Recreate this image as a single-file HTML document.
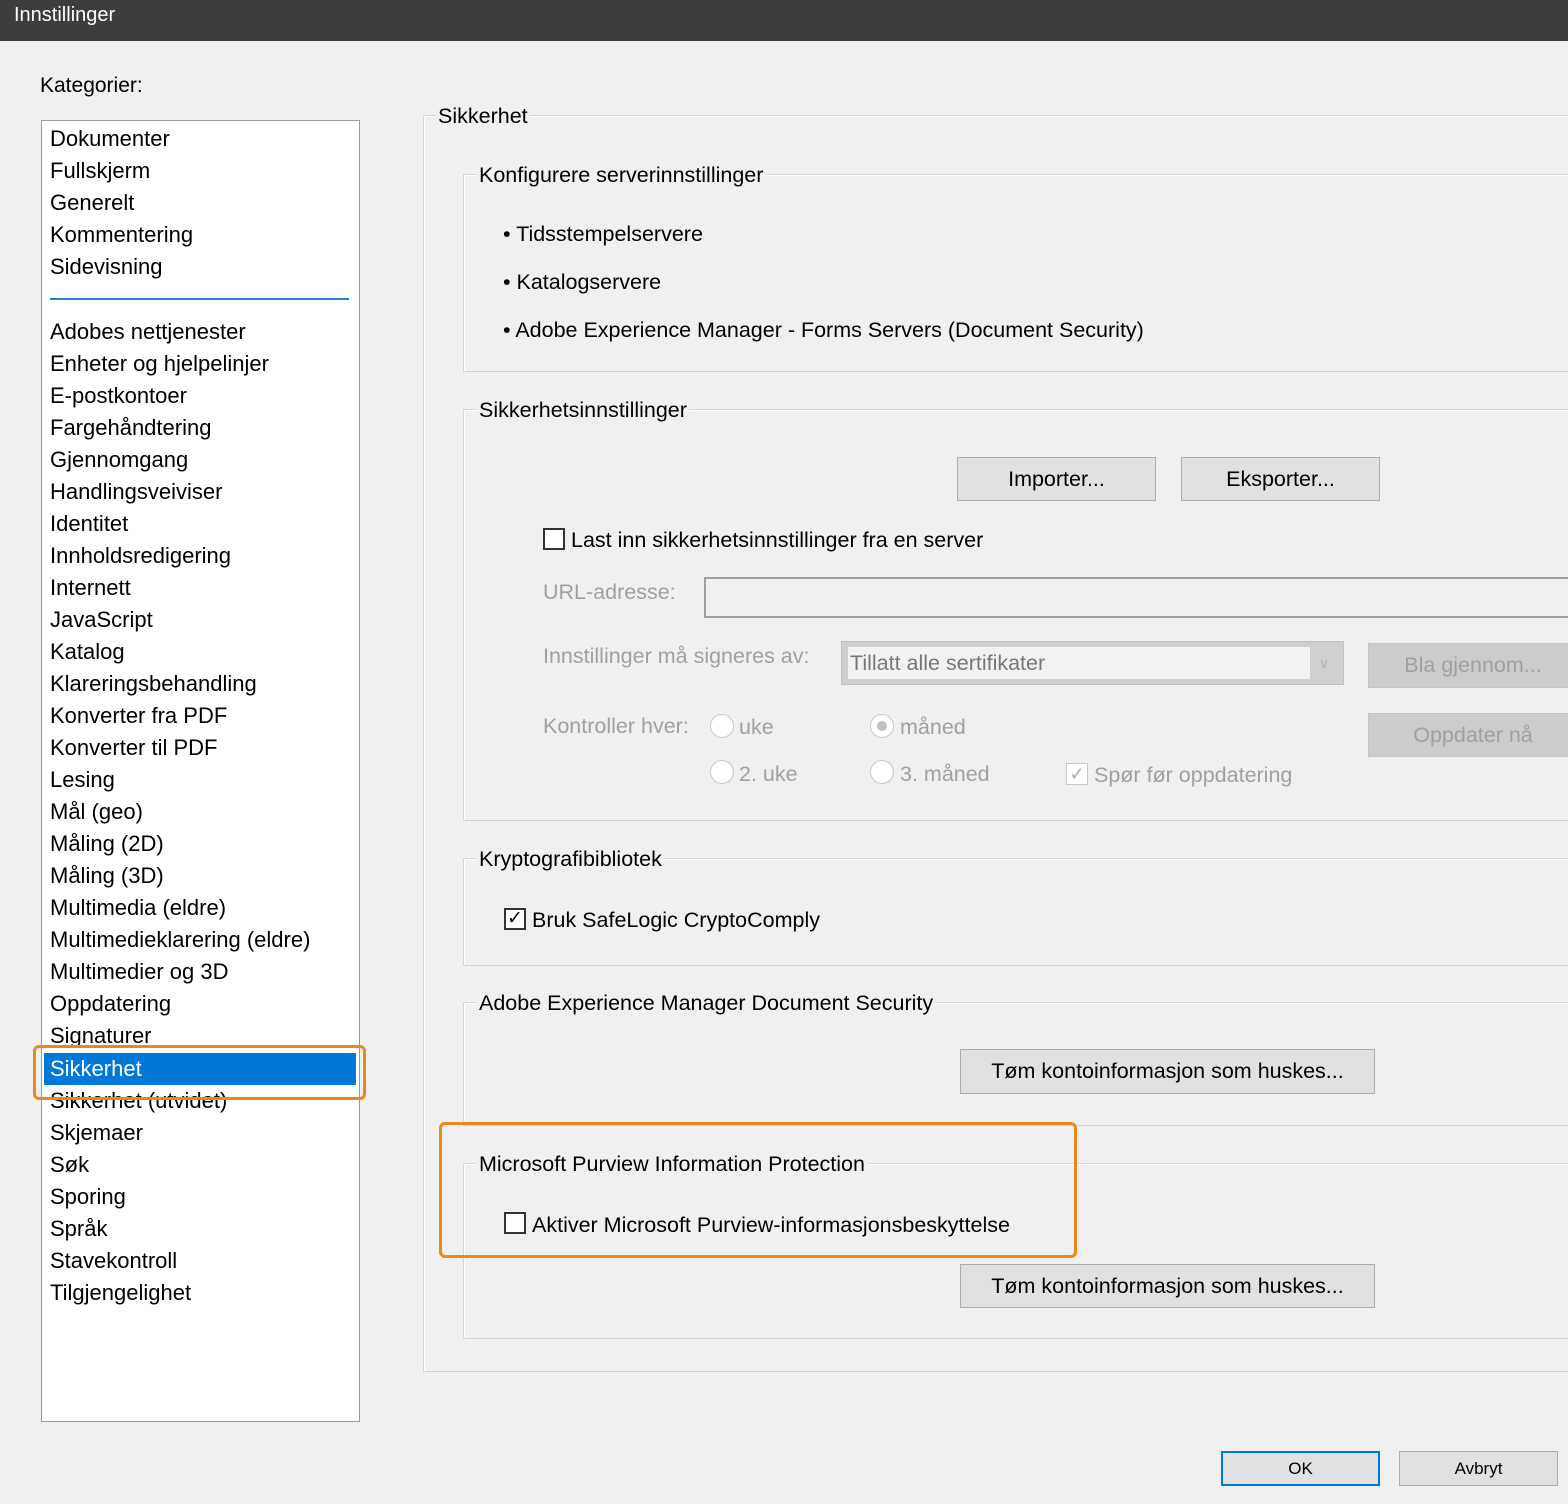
<!DOCTYPE html>
<html><head><meta charset="utf-8"><style>
*{margin:0;padding:0;box-sizing:border-box}
body{width:1568px;height:1504px;background:#f0f0f0;position:relative;overflow:hidden;font-family:"Liberation Sans",Arial,sans-serif;font-size:21.5px;color:#000}
.a{position:absolute;white-space:nowrap;line-height:24px}
.g{position:absolute;border:1px solid #d5d5d5;box-shadow:inset 1px 1px 0 #fff}
.lbl{position:absolute;background:#f0f0f0;padding:0 2px;line-height:24px;white-space:nowrap}
.btn{position:absolute;background:#e1e1e1;border:1px solid #adadad;text-align:center;white-space:nowrap}
.dis{color:#a0a0a0}
.cb{position:absolute;width:22px;height:22px;border:2px solid #333;background:#fff}
.rd{position:absolute;width:24px;height:24px;border:1px solid #c8c8c8;border-radius:50%;background:#fff}
.li{position:absolute;left:50px;line-height:24px;font-size:22px}
</style></head><body>
<div style="position:absolute;left:0;top:0;width:1568px;height:41px;background:#3d3d3d"></div>
<div class="a" style="left:14px;top:3px;color:#fff;font-size:20px">Innstillinger</div>
<div class="a" style="left:40px;top:74px;font-size:21px">Kategorier:</div>
<div style="position:absolute;left:41px;top:120px;width:319px;height:1302px;background:#fff;border:1px solid #9a9a9a"></div>
<div style="position:absolute;left:50px;top:298px;width:299px;height:2px;background:#2a7fd0"></div>
<div style="position:absolute;left:44px;top:1053px;width:312px;height:32px;background:#0078d7"></div>
<div class="li" style="top:127px">Dokumenter</div>
<div class="li" style="top:159px">Fullskjerm</div>
<div class="li" style="top:191px">Generelt</div>
<div class="li" style="top:223px">Kommentering</div>
<div class="li" style="top:255px">Sidevisning</div>
<div class="li" style="top:320px">Adobes nettjenester</div>
<div class="li" style="top:352px">Enheter og hjelpelinjer</div>
<div class="li" style="top:384px">E-postkontoer</div>
<div class="li" style="top:416px">Fargehåndtering</div>
<div class="li" style="top:448px">Gjennomgang</div>
<div class="li" style="top:480px">Handlingsveiviser</div>
<div class="li" style="top:512px">Identitet</div>
<div class="li" style="top:544px">Innholdsredigering</div>
<div class="li" style="top:576px">Internett</div>
<div class="li" style="top:608px">JavaScript</div>
<div class="li" style="top:640px">Katalog</div>
<div class="li" style="top:672px">Klareringsbehandling</div>
<div class="li" style="top:704px">Konverter fra PDF</div>
<div class="li" style="top:736px">Konverter til PDF</div>
<div class="li" style="top:768px">Lesing</div>
<div class="li" style="top:800px">Mål (geo)</div>
<div class="li" style="top:832px">Måling (2D)</div>
<div class="li" style="top:864px">Måling (3D)</div>
<div class="li" style="top:896px">Multimedia (eldre)</div>
<div class="li" style="top:928px">Multimedieklarering (eldre)</div>
<div class="li" style="top:960px">Multimedier og 3D</div>
<div class="li" style="top:992px">Oppdatering</div>
<div class="li" style="top:1024px">Signaturer</div>
<div class="li" style="top:1057px;color:#fff">Sikkerhet</div>
<div class="li" style="top:1089px">Sikkerhet (utvidet)</div>
<div class="li" style="top:1121px">Skjemaer</div>
<div class="li" style="top:1153px">Søk</div>
<div class="li" style="top:1185px">Sporing</div>
<div class="li" style="top:1217px">Språk</div>
<div class="li" style="top:1249px">Stavekontroll</div>
<div class="li" style="top:1281px">Tilgjengelighet</div>
<div style="position:absolute;left:33px;top:1045px;width:333px;height:55px;border:3px solid #e8891c;border-radius:6px"></div>

<div class="g" style="left:423px;top:115px;width:1160px;height:1257px"></div>
<div class="lbl" style="left:436px;top:104px">Sikkerhet</div>

<div class="g" style="left:463px;top:174px;width:1120px;height:198px"></div>
<div class="lbl" style="left:477px;top:163px">Konfigurere serverinnstillinger</div>
<div class="a" style="left:503px;top:222px">• Tidsstempelservere</div>
<div class="a" style="left:503px;top:270px">• Katalogservere</div>
<div class="a" style="left:503px;top:318px">• Adobe Experience Manager - Forms Servers (Document Security)</div>

<div class="g" style="left:463px;top:409px;width:1120px;height:412px"></div>
<div class="lbl" style="left:477px;top:398px">Sikkerhetsinnstillinger</div>
<div class="btn" style="left:957px;top:457px;width:199px;height:44px;line-height:42px">Importer...</div>
<div class="btn" style="left:1181px;top:457px;width:199px;height:44px;line-height:42px">Eksporter...</div>
<div class="cb" style="left:543px;top:528px"></div>
<div class="a" style="left:571px;top:528px">Last inn sikkerhetsinnstillinger fra en server</div>
<div class="a dis" style="left:543px;top:580px">URL-adresse:</div>
<div style="position:absolute;left:704px;top:577px;width:870px;height:41px;border:2px solid #a0a0a0;border-right:none;background:#f0f0f0"></div>
<div class="a dis" style="left:543px;top:644px">Innstillinger må signeres av:</div>
<div style="position:absolute;left:841px;top:641px;width:503px;height:44px;background:#cfcfcf;border:1px solid #c0c0c0"></div>
<div style="position:absolute;left:848px;top:647px;width:462px;height:32px;background:#f2f2f2"></div>
<div class="a" style="left:850px;top:651px;color:#777">Tillatt alle sertifikater</div>
<div class="a" style="left:1319px;top:651px;color:#b0b0b0;font-size:14px">∨</div>
<div class="btn dis" style="left:1368px;top:643px;width:210px;height:45px;line-height:43px;background:#cccccc;border-color:#c4c4c4">Bla gjennom...</div>
<div class="btn dis" style="left:1368px;top:713px;width:210px;height:44px;line-height:43px;background:#cccccc;border-color:#c4c4c4">Oppdater nå</div>
<div class="a dis" style="left:543px;top:714px">Kontroller hver:</div>
<div class="rd" style="left:710px;top:714px"></div>
<div class="a dis" style="left:739px;top:715px">uke</div>
<div class="rd" style="left:870px;top:714px"></div>
<div style="position:absolute;left:877px;top:721px;width:10px;height:10px;border-radius:50%;background:#c0c0c0"></div>
<div class="a dis" style="left:900px;top:715px">måned</div>
<div class="rd" style="left:710px;top:760px"></div>
<div class="a dis" style="left:739px;top:762px">2. uke</div>
<div class="rd" style="left:870px;top:760px"></div>
<div class="a dis" style="left:900px;top:762px">3. måned</div>
<div class="cb" style="left:1066px;top:763px;border:1px solid #c8c8c8;color:#aaa;font-size:18px;line-height:20px;text-align:center">✓</div>
<div class="a dis" style="left:1094px;top:763px">Spør før oppdatering</div>

<div class="g" style="left:463px;top:858px;width:1120px;height:108px"></div>
<div class="lbl" style="left:477px;top:847px">Kryptografibibliotek</div>
<div class="cb" style="left:504px;top:908px;font-size:19px;line-height:18px;text-align:center">✓</div>
<div class="a" style="left:532px;top:908px">Bruk SafeLogic CryptoComply</div>

<div class="g" style="left:463px;top:1002px;width:1120px;height:124px"></div>
<div class="lbl" style="left:477px;top:991px">Adobe Experience Manager Document Security</div>
<div class="btn" style="left:960px;top:1049px;width:415px;height:45px;line-height:43px">Tøm kontoinformasjon som huskes...</div>

<div class="g" style="left:463px;top:1163px;width:1120px;height:176px"></div>
<div class="lbl" style="left:477px;top:1152px">Microsoft Purview Information Protection</div>
<div class="cb" style="left:504px;top:1212px"></div>
<div class="a" style="left:532px;top:1213px">Aktiver Microsoft Purview-informasjonsbeskyttelse</div>
<div class="btn" style="left:960px;top:1264px;width:415px;height:44px;line-height:42px">Tøm kontoinformasjon som huskes...</div>
<div style="position:absolute;left:439px;top:1122px;width:638px;height:136px;border:3px solid #e8891c;border-radius:6px"></div>

<div class="btn" style="left:1221px;top:1451px;width:159px;height:35px;line-height:31px;font-size:17px;border:2px solid #0078d7">OK</div>
<div class="btn" style="left:1399px;top:1451px;width:159px;height:35px;line-height:33px;font-size:17px">Avbryt</div>
</body></html>
